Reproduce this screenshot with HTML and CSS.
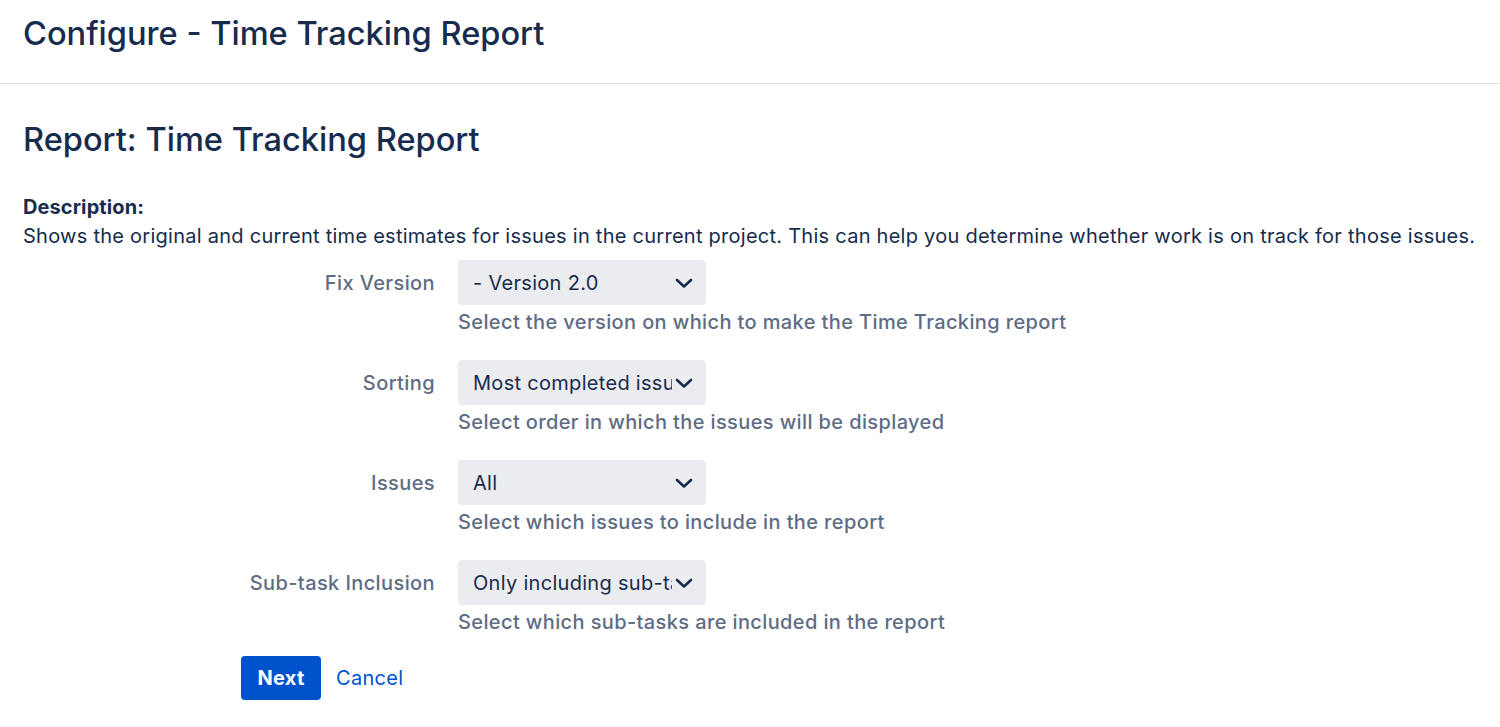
FILE: index.html
```html
<!DOCTYPE html>
<html lang="en">
<head>
    <meta charset="UTF-8">
    <title>Configure - Time Tracking Report</title>
    <link rel="stylesheet" href="styles.css">
</head>
<body>
    <!-- Cabecera -->
    <header class="page-header">
        <h1>Configure - Time Tracking Report</h1>
    </header>

    <main class="content">
        <h2>Report: Time Tracking Report</h2>

        <div class="description">
            <strong>Description:</strong>
            <p>Shows the original and current time estimates for issues in the current project. This can help you determine whether work is on track for those issues.</p>
        </div>

        <form class="report-form">
            <div class="field">
                <label for="fixVersion">Fix Version</label>
                <div class="control">
                    <div class="select">
                        <span>- Version 2.0</span>
                        <svg class="chevron" width="24" height="24" viewBox="0 0 24 24"><path d="M5 9l7 6.5L19 9" fill="none" stroke="#172b4d" stroke-width="2.6" stroke-linecap="round" stroke-linejoin="round"/></svg>
                    </div>
                    <div class="help">Select the version on which to make the Time Tracking report</div>
                </div>
            </div>

            <div class="field">
                <label for="sorting">Sorting</label>
                <div class="control">
                    <div class="select">
                        <span>Most completed issues first</span>
                        <svg class="chevron" width="24" height="24" viewBox="0 0 24 24"><path d="M5 9l7 6.5L19 9" fill="none" stroke="#172b4d" stroke-width="2.6" stroke-linecap="round" stroke-linejoin="round"/></svg>
                    </div>
                    <div class="help">Select order in which the issues will be displayed</div>
                </div>
            </div>

            <div class="field">
                <label for="issues">Issues</label>
                <div class="control">
                    <div class="select">
                        <span>All</span>
                        <svg class="chevron" width="24" height="24" viewBox="0 0 24 24"><path d="M5 9l7 6.5L19 9" fill="none" stroke="#172b4d" stroke-width="2.6" stroke-linecap="round" stroke-linejoin="round"/></svg>
                    </div>
                    <div class="help">Select which issues to include in the report</div>
                </div>
            </div>

            <div class="field">
                <label for="subtasks">Sub-task Inclusion</label>
                <div class="control">
                    <div class="select">
                        <span>Only including sub-tasks</span>
                        <svg class="chevron" width="24" height="24" viewBox="0 0 24 24"><path d="M5 9l7 6.5L19 9" fill="none" stroke="#172b4d" stroke-width="2.6" stroke-linecap="round" stroke-linejoin="round"/></svg>
                    </div>
                    <div class="help">Select which sub-tasks are included in the report</div>
                </div>
            </div>

            <div class="buttons">
                <button type="button" class="btn">Next</button>
                <a href="#" class="cancel">Cancel</a>
            </div>
        </form>
    </main>
</body>
</html>
```

FILE: styles.css
```css
/* Estilos generales */
body {
    font-family: Inter, "Noto Sans", sans-serif;
    color: #172b4d;
    background: #fff;
    margin: 0;
    padding: 0;
}

.page-header {
    height: 84px;
    border-bottom: 1px solid #dfe1e6;
    padding: 0 23px;
    box-sizing: border-box;
}

h1,
h2 {
    font-size: 32.6px;
    font-weight: 500;
    margin: 0;
    line-height: 40px;
}

.page-header h1 {
    padding-top: 13px;
}

.content {
    padding: 0 23px;
}

.content h2 {
    padding-top: 35px;
}

.description {
    margin-top: 34px;
    font-size: 20px;
    line-height: 29px;
    letter-spacing: 0.26px;
}

.description strong {
    font-weight: 700;
    letter-spacing: 0.1px;
}

.description p {
    margin: 0;
}

.field {
    display: flex;
    gap: 23px;
    margin-top: 9px;
}

.field + .field {
    margin-top: 26px;
}

.field label {
    width: 412px;
    height: 45px;
    display: flex;
    align-items: center;
    justify-content: flex-end;
    font-size: 20px;
    letter-spacing: 0.4px;
    color: #5e6c84;
    font-weight: 500;
}

.select {
    width: 248px;
    height: 45px;
    background: #ebecf0;
    border-radius: 4px;
    display: flex;
    align-items: center;
    padding: 0 10px 0 15px;
    box-sizing: border-box;
    font-size: 20px;
    letter-spacing: 0.3px;
    color: #172b4d;
}

.select span {
    flex: 1;
    white-space: nowrap;
    overflow: hidden;
}

.chevron {
    flex: none;
}

.help {
    font-size: 20px;
    letter-spacing: 0.38px;
    color: #5e6c84;
    font-weight: 500;
    margin-top: 5px;
    line-height: 24px;
}

.buttons {
    display: flex;
    align-items: center;
    gap: 15px;
    margin-top: 22px;
    padding-left: 218px;
}

.btn {
    width: 80px;
    height: 44px;
    background-color: #0052cc;
    color: #fff;
    border: none;
    border-radius: 4px;
    font-family: inherit;
    font-size: 20px;
    font-weight: 700;
    letter-spacing: 0.3px;
    cursor: pointer;
}

.cancel {
    color: #0052cc;
    text-decoration: none;
    font-size: 20px;
    letter-spacing: 0.3px;
}
```
